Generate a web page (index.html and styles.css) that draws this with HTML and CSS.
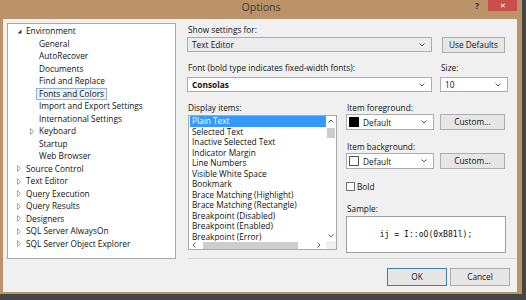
FILE: index.html
```html
<!DOCTYPE html>
<html lang="en">
  <head>
    <meta charset="UTF-8" />
    <title>Options</title>
    <link rel="stylesheet" href="styles.css">
  </head>
  <body>
    <div class="window">
      <div class="titlebar">
        <span></span>
        <span class="title">Options</span>
        <div class="caption">
          <span class="help">?</span>
          <span class="close">&#x2715;</span>
        </div>
      </div>

      <div class="client">
        <div class="main">
          <!-- category tree -->
          <ul class="tree">
            <li><i class="arrow"><svg width="5" height="5"><polygon points="4.5,0.5 4.5,4.5 0.5,4.5" fill="#3c3c3c"/></svg></i><span>Environment</span></li>
            <li class="child"><i class="arrow"></i><span>General</span></li>
            <li class="child"><i class="arrow"></i><span>AutoRecover</span></li>
            <li class="child"><i class="arrow"></i><span>Documents</span></li>
            <li class="child"><i class="arrow"></i><span>Find and Replace</span></li>
            <li class="child selected"><i class="arrow"></i><span>Fonts and Colors</span></li>
            <li class="child"><i class="arrow"></i><span>Import and Export Settings</span></li>
            <li class="child"><i class="arrow"></i><span>International Settings</span></li>
            <li class="child"><i class="arrow"><svg width="4" height="7"><polygon points="0.5,0.5 3.5,3.5 0.5,6.5" fill="none" stroke="#a8a8a8"/></svg></i><span>Keyboard</span></li>
            <li class="child"><i class="arrow"></i><span>Startup</span></li>
            <li class="child"><i class="arrow"></i><span>Web Browser</span></li>
            <li><i class="arrow"><svg width="4" height="7"><polygon points="0.5,0.5 3.5,3.5 0.5,6.5" fill="none" stroke="#a8a8a8"/></svg></i><span>Source Control</span></li>
            <li><i class="arrow"><svg width="4" height="7"><polygon points="0.5,0.5 3.5,3.5 0.5,6.5" fill="none" stroke="#a8a8a8"/></svg></i><span>Text Editor</span></li>
            <li><i class="arrow"><svg width="4" height="7"><polygon points="0.5,0.5 3.5,3.5 0.5,6.5" fill="none" stroke="#a8a8a8"/></svg></i><span>Query Execution</span></li>
            <li><i class="arrow"><svg width="4" height="7"><polygon points="0.5,0.5 3.5,3.5 0.5,6.5" fill="none" stroke="#a8a8a8"/></svg></i><span>Query Results</span></li>
            <li><i class="arrow"><svg width="4" height="7"><polygon points="0.5,0.5 3.5,3.5 0.5,6.5" fill="none" stroke="#a8a8a8"/></svg></i><span>Designers</span></li>
            <li><i class="arrow"><svg width="4" height="7"><polygon points="0.5,0.5 3.5,3.5 0.5,6.5" fill="none" stroke="#a8a8a8"/></svg></i><span>SQL Server AlwaysOn</span></li>
            <li><i class="arrow"><svg width="4" height="7"><polygon points="0.5,0.5 3.5,3.5 0.5,6.5" fill="none" stroke="#a8a8a8"/></svg></i><span>SQL Server Object Explorer</span></li>
          </ul>

          <div class="settings">
            <div class="label">Show settings for:</div>
            <div class="row row-top">
              <div class="combo combo-gray combo-wide"><span>Text Editor</span><svg width="6" height="4"><polyline points="0.5,0.5 3,3 5.5,0.5" fill="none" stroke="#555"/></svg></div>
              <div class="button btn-defaults">Use Defaults</div>
            </div>

            <div class="row row-labels">
              <div class="label label-font">Font (bold type indicates fixed-width fonts):</div>
              <div class="label">Size:</div>
            </div>
            <div class="row">
              <div class="combo combo-wide"><b>Consolas</b><svg width="6" height="4"><polyline points="0.5,0.5 3,3 5.5,0.5" fill="none" stroke="#555"/></svg></div>
              <div class="combo combo-size"><span>10</span><svg width="6" height="4"><polyline points="0.5,0.5 3,3 5.5,0.5" fill="none" stroke="#555"/></svg></div>
            </div>

            <div class="middle">
              <div class="items">
                <div class="label">Display items:</div>
                <div class="listbox">
                  <ul class="list">
                    <li class="active">Plain Text</li>
                    <li>Selected Text</li>
                    <li>Inactive Selected Text</li>
                    <li>Indicator Margin</li>
                    <li>Line Numbers</li>
                    <li>Visible White Space</li>
                    <li>Bookmark</li>
                    <li>Brace Matching (Highlight)</li>
                    <li>Brace Matching (Rectangle)</li>
                    <li>Breakpoint (Disabled)</li>
                    <li>Breakpoint (Enabled)</li>
                    <li>Breakpoint (Error)</li>
                  </ul>
                  <div class="vscroll">
                    <svg width="6" height="4"><polyline points="0.5,3.5 3,1 5.5,3.5" fill="none" stroke="#606060"/></svg>
                    <div class="vthumb"></div>
                    <svg class="down" width="6" height="4"><polyline points="0.5,0.5 3,3 5.5,0.5" fill="none" stroke="#606060"/></svg>
                  </div>
                  <div class="hscroll">
                    <svg width="4" height="6"><polyline points="3.5,0.5 1,3 3.5,5.5" fill="none" stroke="#606060"/></svg>
                    <div class="hthumb"></div>
                    <svg width="4" height="6"><polyline points="0.5,0.5 3,3 0.5,5.5" fill="none" stroke="#606060"/></svg>
                  </div>
                  <div class="corner"></div>
                </div>
              </div>

              <div class="colors">
                <div class="label">Item foreground:</div>
                <div class="row">
                  <div class="combo combo-color"><i class="swatch swatch-black"></i><span>Default</span><svg width="6" height="4"><polyline points="0.5,0.5 3,3 5.5,0.5" fill="none" stroke="#555"/></svg></div>
                  <div class="button btn-custom">Custom...</div>
                </div>
                <div class="label label-gap">Item background:</div>
                <div class="row">
                  <div class="combo combo-color"><i class="swatch"></i><span>Default</span><svg width="6" height="4"><polyline points="0.5,0.5 3,3 5.5,0.5" fill="none" stroke="#555"/></svg></div>
                  <div class="button btn-custom">Custom...</div>
                </div>
                <div class="check"><i class="box"></i>Bold</div>
                <div class="label label-gap">Sample:</div>
                <div class="sample">ij = I::oO(0xB81l);</div>
              </div>
            </div>

            <div class="separator"></div>
          </div>
        </div>

        <div class="footer">
          <div class="button btn-ok">OK</div>
          <div class="button btn-cancel">Cancel</div>
        </div>
      </div>
    </div>
  </body>
</html>
```

FILE: styles.css
```css
* {
  margin: 0;
  padding: 0;
  box-sizing: border-box;
}

body {
  background: #454545;
  font-family: "Open Sans", sans-serif;
  font-size: 8.3px;
  color: #111;
}

/* Window frame */
.window {
  width: 522px;
  height: 294px;
  background: #ba9468;
}

.titlebar {
  height: 19px;
  display: grid;
  grid-template-columns: 1fr auto 1fr;
  align-items: start;
}

.title {
  font-size: 10.6px;
  line-height: 14px;
  color: #3a3a3a;
}

.caption {
  justify-self: end;
  display: flex;
  align-items: flex-start;
  margin-right: 5px;
}

.help {
  font-size: 8.5px;
  font-weight: bold;
  line-height: 11px;
  color: #2b2b2b;
  margin-right: 9px;
}

.close {
  width: 29px;
  height: 11px;
  background: #c7504b;
  color: #fff;
  font-size: 7px;
  line-height: 11px;
  text-align: center;
}

.client {
  height: 273px;
  margin: 0 5px 0 3px;
  background: #f0f0f0;
}

.main {
  display: flex;
  align-items: flex-start;
  padding: 4px 0 0 4px;
}

/* Tree */
.tree {
  list-style: none;
  width: 169px;
  height: 236px;
  background: #fff;
  border: 1px solid #a9a9a9;
  padding-top: 1px;
}

.tree li {
  display: flex;
  align-items: center;
  height: 12.5px;
  line-height: 12.5px;
  padding-left: 9px;
  white-space: nowrap;
}

.tree li.child {
  padding-left: 22px;
}

.tree .arrow {
  width: 9px;
  display: flex;
  align-items: center;
}

.tree .arrow svg {
  display: block;
}

.tree li.selected span {
  background: #e8f3fc;
  border: 1px solid #8db2e3;
  line-height: 10.5px;
  padding: 0 2px;
  margin-left: -3px;
}

/* Settings column */
.settings {
  width: 330px;
  margin-left: 11px;
}

.label {
  line-height: 11px;
  height: 11px;
  padding-left: 1px;
  white-space: nowrap;
}

.settings > .label:first-child {
  margin-top: 1px;
  margin-bottom: 2px;
}

.row {
  display: flex;
  align-items: flex-start;
}

.row-top {
  gap: 10px;
}

.row-labels {
  margin-top: 9px;
  margin-bottom: 4px;
}

.label-font {
  width: 253px;
}

.combo {
  display: flex;
  align-items: center;
  justify-content: space-between;
  height: 15px;
  background: #fff;
  border: 1px solid #acacac;
  padding: 0 6px 0 4px;
}

.combo svg {
  display: block;
}

.combo-gray {
  background: #ececec;
}

.combo-wide {
  width: 245px;
}

.combo-size {
  width: 68px;
  margin-left: 8px;
}

.button {
  height: 16px;
  line-height: 14px;
  text-align: center;
  background: #e6e6e6;
  border: 1px solid #adadad;
}

.btn-defaults {
  width: 63px;
}

/* Display items + colors */
.middle {
  display: flex;
  align-items: flex-start;
  margin-top: 10px;
}

.items {
  width: 150px;
}

.items .label {
  margin-bottom: 2px;
}

.listbox {
  margin-left: 1px;
  width: 149px;
  height: 135px;
  background: #fff;
  border: 1px solid #a9a9a9;
  display: grid;
  grid-template-columns: minmax(0, 1fr) 10px;
  grid-template-rows: minmax(0, 1fr) 8px;
  overflow: hidden;
}

.list {
  list-style: none;
  overflow: hidden;
  padding-left: 1px;
}

.list li {
  height: 10.5px;
  line-height: 10.5px;
  padding-left: 2px;
  white-space: nowrap;
}

.list li.active {
  background: #3399ff;
  color: #fff;
}

.vscroll {
  display: flex;
  flex-direction: column;
  align-items: center;
  padding-top: 3px;
  min-height: 0;
}

.vthumb {
  width: 8px;
  height: 10px;
  background: #cdcdcd;
  margin-top: 5px;
}

.vscroll .down {
  margin-top: auto;
  margin-bottom: 3px;
}

.hscroll {
  display: flex;
  align-items: center;
  padding: 0 5px 0 3px;
}

.hthumb {
  width: 95px;
  height: 7px;
  background: #cdcdcd;
  margin-left: 7px;
  margin-right: auto;
}

.corner {
  background: #f0f0f0;
}

.colors {
  width: 160px;
  margin-left: 9px;
}

.colors .label {
  margin-bottom: 1px;
}

.colors .label-gap {
  margin-top: 11px;
}

.combo-color {
  width: 88px;
  height: 16px;
  padding-left: 2px;
}

.combo-color span {
  flex: 1;
  margin-left: 4px;
}

.swatch {
  width: 10px;
  height: 10px;
  border: 1px solid #555;
  background: #fff;
}

.swatch-black {
  background: #000;
  border-color: #000;
}

.btn-custom {
  width: 65px;
  margin-left: 6px;
}

.check {
  display: flex;
  align-items: center;
  margin-top: 12px;
  line-height: 11px;
}

.check .box {
  width: 9px;
  height: 9px;
  background: #fff;
  border: 1px solid #707070;
  margin-right: 2px;
}

.sample {
  margin-top: 2px;
  width: 160px;
  height: 37px;
  background: #fff;
  border: 1px solid #a0a0a0;
  font-family: "DejaVu Sans Mono", monospace;
  font-size: 8.1px;
  line-height: 35px;
  text-align: center;
}

.separator {
  margin: 5px 0 0 1px;
  width: 328px;
  border-top: 1px solid #d5d5d5;
}

/* Dialog buttons */
.footer {
  display: flex;
  justify-content: flex-end;
  gap: 3px;
  margin-top: 9px;
  padding-right: 7px;
}

.footer .button {
  width: 60px;
  height: 18px;
  line-height: 16px;
}

.btn-ok {
  border-color: #3c7fb1;
}
```
